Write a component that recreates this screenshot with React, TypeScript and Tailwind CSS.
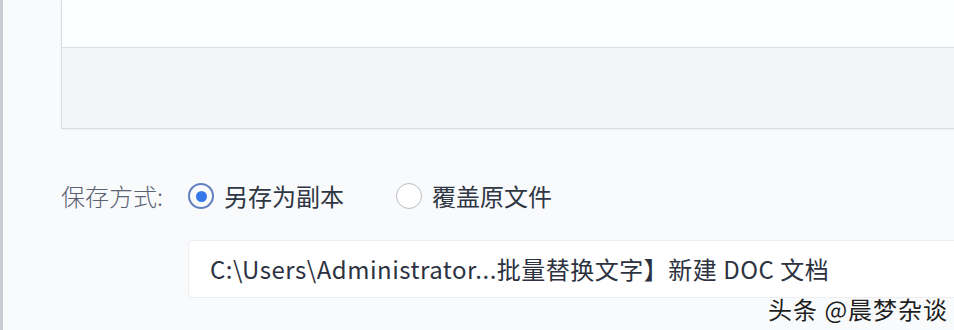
export default function App() {
  return (
    <div
      className="relative flex h-[330px] w-[954px] overflow-hidden bg-[#f9fafc]"
      style={{ fontFamily: '"Noto Sans CJK SC", "Noto Sans", sans-serif' }}
    >
      <div className="w-[3px] shrink-0 bg-[#c9ccd3]" />
      <div className="flex flex-1 flex-col pl-[58px]">
        <div className="-mr-4 flex h-[129px] flex-col border-x border-b border-[#d9dde3] shadow-[0_1px_2px_rgba(0,0,0,0.05)]">
          <div className="h-[48px] border-b border-[#dde1e7] bg-[#fdfeff]" />
          <div className="flex-1 bg-[#f3f6f9]" />
        </div>

        <div className="mt-[54px] flex items-center text-[24px] leading-none">
          <span className="w-[127px] font-light text-[#5b6374]">保存方式:</span>
          <label className="flex items-center gap-[10px] text-[#2f3644]">
            <span className="flex h-[26px] w-[26px] items-center justify-center rounded-full border-2 border-[#5f7fbf]">
              <span className="h-[11px] w-[11px] rounded-full bg-[#3478ea]" />
            </span>
            另存为副本
          </label>
          <label className="ml-[52px] flex items-center gap-[10px] text-[#2f3644]">
            <span className="h-[26px] w-[26px] rounded-full border-[1.5px] border-[#b9bcc2] bg-white" />
            覆盖原文件
          </label>
        </div>

        <div className="-mr-4 ml-[127px] mt-[31px] flex h-[58px] items-center rounded-[4px] border border-[#eceef2] bg-white pl-[21px] text-[24px] tracking-[0.5px] text-[#2c3240]">
          C:\Users\Administrator...批量替换文字】新建 DOC 文档
        </div>
      </div>

      <div className="absolute left-[768px] top-[297px] text-[24px] leading-none tracking-[1px] text-[#1f1f1f] [text-shadow:0_0_2px_#fff,0_0_2px_#fff]">
        头条 @晨梦杂谈
      </div>
    </div>
  );
}
